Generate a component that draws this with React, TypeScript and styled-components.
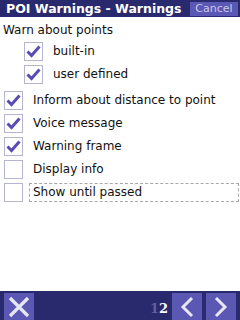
import React from "react";
import styled, { createGlobalStyle } from "styled-components";

const Global = createGlobalStyle`
  html, body { margin: 0; padding: 0; background: #ffffff; }
  body { width: 240px; height: 320px; overflow: hidden; font-family: "DejaVu Sans", Tahoma, sans-serif; }
`;

const Page = styled.div`
  width: 240px;
  height: 320px;
  display: flex;
  flex-direction: column;
  background: #ffffff;
`;

const TitleBar = styled.div`
  height: 17px;
  background: #29296d;
  display: flex;
  align-items: center;
  justify-content: space-between;
  padding: 0 2px 0 6px;
  box-sizing: border-box;
`;

const Title = styled.div`
  color: #ffffff;
  font-weight: bold;
  font-size: 12.5px;
`;

const CancelButton = styled.div`
  width: 48px;
  height: 14px;
  background: #5b58b4;
  color: #c9c9e6;
  font-size: 11px;
  display: flex;
  align-items: center;
  justify-content: center;
`;

const Content = styled.div`
  flex: 1;
  display: flex;
  flex-direction: column;
  padding: 5px 0 0 0;
`;

const SectionLabel = styled.div`
  font-size: 12px;
  color: #111111;
  padding-left: 3px;
  height: 17px;
  line-height: 17px;
  margin-bottom: 3px;
`;

const Row = styled.div<{ $indent?: boolean; $gap?: number }>`
  display: flex;
  align-items: center;
  height: 19px;
  margin-top: ${(p) => p.$gap ?? 4}px;
  padding-left: ${(p) => (p.$indent ? 24 : 4)}px;
`;

const Box = styled.div`
  width: 17px;
  height: 17px;
  border: 1px solid #b5b5cf;
  background: #ffffff;
  display: flex;
  align-items: center;
  justify-content: center;
  flex-shrink: 0;
`;

const Label = styled.div<{ $focus?: boolean }>`
  font-size: 12px;
  color: #111111;
  margin-left: ${(p) => (p.$focus ? 6 : 9)}px;
  padding-left: ${(p) => (p.$focus ? 3 : 0)}px;
  height: 17px;
  line-height: 17px;
  flex: ${(p) => (p.$focus ? 1 : "none")};
  margin-right: ${(p) => (p.$focus ? 1 : 0)}px;
  border: ${(p) => (p.$focus ? "1px dashed #a8a8a8" : "1px solid transparent")};
`;

const BottomBar = styled.div`
  height: 29px;
  background: #29296d;
  display: flex;
  align-items: flex-end;
  padding: 0 4px;
  box-sizing: border-box;
`;

const NavButton = styled.div<{ $ml?: number }>`
  width: 30px;
  height: 27px;
  background: #5b58b4;
  display: flex;
  align-items: center;
  justify-content: center;
  margin-left: ${(p) => p.$ml ?? 0}px;
`;

const Pager = styled.div`
  margin-left: auto;
  font-family: "DejaVu Serif", serif;
  font-weight: bold;
  font-size: 13px;
  height: 27px;
  display: flex;
  align-items: center;
  padding-top: 4px;
  box-sizing: border-box;
  margin-right: 4px;
`;

const Dim = styled.span`
  color: #5f5fa8;
`;

const Cur = styled.span`
  color: #ffffff;
`;

const Check = () => (
  <svg width="15" height="13" viewBox="0 0 15 13">
    <path d="M1.5 6.5 L5.5 10.5 L13.5 1.5" fill="none" stroke="#5a4cb2" strokeWidth="3" />
  </svg>
);

const CheckRow = ({ checked, text, indent, focus, gap }: { checked?: boolean; text: string; indent?: boolean; focus?: boolean; gap?: number }) => (
  <Row $indent={indent} $gap={gap}>
    <Box>{checked && <Check />}</Box>
    <Label $focus={focus}>{text}</Label>
  </Row>
);

export default function App() {
  return (
    <Page>
      <Global />
      <TitleBar>
        <Title>POI Warnings - Warnings</Title>
        <CancelButton>Cancel</CancelButton>
      </TitleBar>
      <Content>
        <SectionLabel>Warn about points</SectionLabel>
        <CheckRow indent checked text="built-in" gap={0} />
        <CheckRow indent checked text="user defined" />
        <CheckRow checked text="Inform about distance to point" gap={7} />
        <CheckRow checked text="Voice message" />
        <CheckRow checked text="Warning frame" />
        <CheckRow text="Display info" />
        <CheckRow text="Show until passed" focus />
      </Content>
      <BottomBar>
        <NavButton>
          <svg width="22" height="22" viewBox="0 0 22 22">
            <path d="M2 2 L20 20 M20 2 L2 20" stroke="#e6e6f4" strokeWidth="3.2" />
          </svg>
        </NavButton>
        <Pager>
          <Dim>1</Dim>
          <Cur>2</Cur>
        </Pager>
        <NavButton>
          <svg width="14" height="22" viewBox="0 0 14 22">
            <path d="M12 2 L3 11 L12 20" fill="none" stroke="#e6e6f4" strokeWidth="3" />
          </svg>
        </NavButton>
        <NavButton $ml={4}>
          <svg width="14" height="22" viewBox="0 0 14 22">
            <path d="M2 2 L11 11 L2 20" fill="none" stroke="#e6e6f4" strokeWidth="3" />
          </svg>
        </NavButton>
      </BottomBar>
    </Page>
  );
}
